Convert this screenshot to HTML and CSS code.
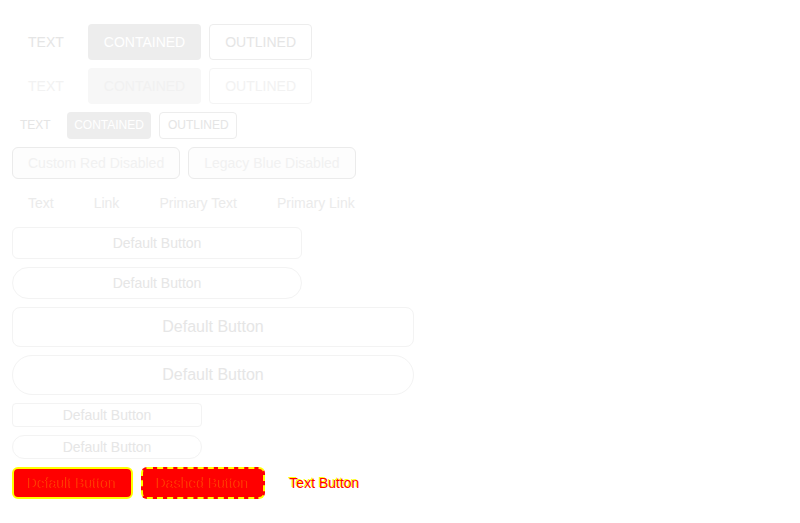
FILE: index.html
```html
<!DOCTYPE html>
<html lang="en">
<head>
    <meta charset="UTF-8">
    <meta name="viewport" content="width=device-width, initial-scale=1.0">
    <title>Buttons</title>
    <link rel="stylesheet" href="styles.css">
</head>
<body>
    <div class="page">
        <!-- MUI style, disabled -->
        <div class="row">
            <button class="mui mui-text">Text</button>
            <button class="mui mui-contained">Contained</button>
            <button class="mui mui-outlined">Outlined</button>
        </div>
        <div class="row faded">
            <button class="mui mui-text">Text</button>
            <button class="mui mui-contained">Contained</button>
            <button class="mui mui-outlined">Outlined</button>
        </div>
        <div class="row">
            <button class="mui small mui-text">Text</button>
            <button class="mui small mui-contained">Contained</button>
            <button class="mui small mui-outlined">Outlined</button>
        </div>

        <!-- Ant style -->
        <div class="row">
            <button class="ant ant-disabled">Custom Red Disabled</button>
            <button class="ant ant-disabled">Legacy Blue Disabled</button>
        </div>
        <div class="row">
            <button class="ant ant-plain">Text</button>
            <button class="ant ant-plain">Link</button>
            <button class="ant ant-plain">Primary Text</button>
            <button class="ant ant-plain">Primary Link</button>
        </div>
        <button class="ant block">Default Button</button>
        <button class="ant block round">Default Button</button>
        <button class="ant block large">Default Button</button>
        <button class="ant block large round">Default Button</button>
        <button class="ant block small">Default Button</button>
        <button class="ant block small round">Default Button</button>

        <!-- Forced colors -->
        <div class="row">
            <button class="ant hc hc-solid">Default Button</button>
            <button class="ant hc hc-dashed">Dashed Button</button>
            <button class="ant hc-text">Text Button</button>
        </div>
    </div>
</body>
</html>
```

FILE: styles.css
```css
body {
    margin: 0;
    padding: 0;
    background-color: #fff;
    font-family: "Liberation Sans", Arial, sans-serif;
}
.page {
    padding: 24px 12px;
    display: flex;
    flex-direction: column;
    align-items: flex-start;
    gap: 8px;
}
.row {
    display: flex;
    gap: 8px;
    align-items: center;
}
button {
    font-family: inherit;
    margin: 0;
    cursor: default;
}

/* MUI like */
.mui {
    font-size: 14px;
    line-height: 24px;
    text-transform: uppercase;
    border-radius: 4px;
    border: none;
    background: transparent;
    color: #e5e5e5;
}
.mui-text {
    padding: 6px 16px;
}
.mui-contained {
    padding: 6px 16px;
    background-color: #ededed;
    color: #fff;
}
.mui-outlined {
    padding: 5px 15px;
    border: 1px solid #ededed;
}
.faded .mui {
    color: #f2f2f2;
}
.faded .mui-contained {
    background-color: #f7f7f7;
    color: #f1f1f1;
}
.faded .mui-outlined {
    border-color: #f4f4f4;
}
.mui.small {
    font-size: 12px;
    line-height: 19px;
    padding: 4px 8px;
}
.mui.small.mui-contained {
    padding: 4px 7.5px;
}
.mui.small.mui-outlined {
    padding: 3px 7.5px;
}

/* Ant like */
.ant {
    font-size: 14px;
    line-height: 22px;
    height: 32px;
    padding: 4px 15px;
    border: 1px solid #f3f3f3;
    border-radius: 6px;
    background: #fff;
    color: #e6e6e6;
}
.ant-disabled {
    background-color: #fdfdfd;
    border-color: #ebebeb;
    color: #f1f1f1;
}
.ant-plain {
    border-color: transparent;
    background: transparent;
    color: #ebebeb;
}
.block {
    width: 290px;
}
.block.large {
    width: 402px;
    height: 40px;
    padding: 7px 15px;
    font-size: 16px;
    line-height: 24px;
    border-radius: 8px;
}
.block.small {
    width: 190px;
    height: 24px;
    padding: 0 7px;
    border-radius: 4px;
}
.block.round {
    border-radius: 32px;
}
.block.large.round {
    border-radius: 40px;
}
.block.small.round {
    border-radius: 24px;
}

/* high contrast */
.hc {
    background-color: #f00;
    border: 2px solid #ff0;
    padding: 3px 14px;
    color: #f00;
    text-shadow: -1px 0 0 rgba(255, 255, 0, 0.3);
}
.hc-dashed {
    border-style: dashed;
}
.hc-text {
    border-color: transparent;
    background: transparent;
    color: #f00;
    text-shadow: -1px -1px 0 #ff0;
}
```
